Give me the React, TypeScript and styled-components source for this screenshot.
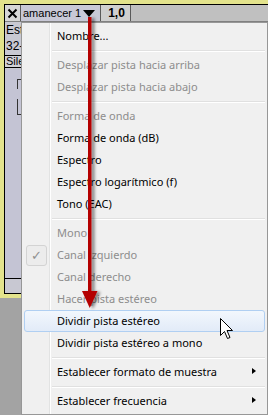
import React from 'react';
import styled, { createGlobalStyle, css } from 'styled-components';

const GlobalStyle = createGlobalStyle`
  html, body {
    margin: 0;
    padding: 0;
    background: #a3a3a3;
  }
  * {
    box-sizing: border-box;
  }
`;

const Screen = styled.div`
  position: relative;
  width: 268px;
  height: 415px;
  overflow: hidden;
  background: #a3a3a3;
  font-family: 'Liberation Sans', Arial, sans-serif;
`;

const Track = styled.div`
  height: 298px;
  border-top: 4px solid #e3e38c;
  border-left: 4px solid #e3e38c;
  border-bottom: 4px solid #e3e38c;
  background: #c0c0c0;
`;

const TrackInner = styled.div`
  display: flex;
  flex-direction: column;
  height: 100%;
  border-top: 1px solid #000;
  border-left: 1px solid #000;
  border-bottom: 1px solid #000;
`;

const TitleRow = styled.div`
  display: flex;
  height: 17px;
  border-bottom: 1px solid #808080;
  background: #c0c0c0;
`;

const TitleCell = styled.div<{ $w: number; $bg: string; $bold?: boolean }>`
  display: flex;
  align-items: center;
  width: ${(p) => p.$w}px;
  flex-shrink: 0;
  background: ${(p) => p.$bg};
  border-right: 1px solid #5a5a5a;
  padding-left: 2px;
  font-size: ${(p) => (p.$bold ? 12 : 11)}px;
  color: #000;
  white-space: nowrap;
  font-weight: ${(p) => (p.$bold ? 700 : 400)};
  justify-content: ${(p) => (p.$bold ? 'center' : 'flex-start')};
`;

const DropArrow = styled.span`
  margin-left: auto;
  margin-right: 5px;
  width: 0;
  height: 0;
  border-left: 6px solid transparent;
  border-right: 6px solid transparent;
  border-top: 7px solid #000;
`;

const Body = styled.div`
  display: flex;
  flex: 1;
`;

const ControlPanel = styled.div`
  display: flex;
  flex-direction: column;
  width: 130px;
  background: #c8c8d2;
  border-right: 1px solid #808080;
`;

/* only the left edge of the panel peeks out from under the menu */
const InfoLine = styled.div`
  width: 16px;
  height: 16px;
  overflow: hidden;
  padding-left: 1px;
  font-size: 12px;
  line-height: 16px;
  color: #000;
  white-space: nowrap;
`;

const ButtonRow = styled.div`
  display: flex;
  padding-top: 1px;
  height: 15px;
`;

const SmallButton = styled.div`
  width: 16px;
  height: 13px;
  overflow: hidden;
  border-top: 1px solid #000;
  border-bottom: 1px solid #000;
  background: #d0d0d6;
  font-size: 11px;
  line-height: 11px;
  padding-left: 1px;
  white-space: nowrap;
`;

const SliderArea = styled.div`
  flex: 1;
  display: flex;
  flex-direction: column;
  gap: 10px;
  padding-top: 10px;
  background: #c4c4d4;
`;

const Slider = styled.div<{ $flip?: boolean }>`
  margin-left: 12px;
  width: 100px;
  height: 10px;
  border-left: 1px solid #333;
  ${(p) =>
    p.$flip
      ? css`
          border-bottom: 1px solid #333;
          height: 16px;
        `
      : css`
          border-top: 1px solid #333;
        `}
`;

const PanelFooter = styled.div`
  height: 15px;
  border-top: 1px solid #000;
  background: #c8c8d2;
`;

const Wave = styled.div`
  flex: 1;
  background: #fff;
`;

const Menu = styled.div`
  position: absolute;
  left: 21px;
  top: 22px;
  width: 247px;
  height: 393px;
  padding: 2px;
  border: 1px solid #979797;
  background: linear-gradient(
    to right,
    #f0f0f0 0,
    #f0f0f0 27px,
    #e2e3e3 27px,
    #e2e3e3 28px,
    #ffffff 28px,
    #ffffff 29px,
    #f0f0f0 29px
  );
  font-family: 'Noto Sans', 'Open Sans', sans-serif;
  font-size: 11px;
`;

const Item = styled.div<{ $disabled?: boolean; $active?: boolean }>`
  display: flex;
  align-items: center;
  height: 22px;
  padding-bottom: 2px;
  border: 1px solid transparent;
  border-radius: 3px;
  color: ${(p) => (p.$disabled ? '#8d8d8d' : '#000')};
  white-space: nowrap;
  ${(p) =>
    p.$active &&
    css`
      border-color: #b0cff2;
      background: linear-gradient(to bottom, #f2f7fd, #e2ebf8);
    `}
`;

const Gutter = styled.div`
  display: flex;
  align-items: center;
  justify-content: center;
  width: 22px;
  height: 20px;
  margin-right: 10px;
`;

const CheckBox = styled.div`
  display: flex;
  align-items: center;
  justify-content: center;
  width: 21px;
  height: 21px;
  margin-top: 2px;
  border: 1px solid #d3d3d3;
  border-radius: 3px;
  background: #ececec;
  color: #8f8f8f;
  font-size: 13px;
`;

const Label = styled.span`
  flex: 1;
`;

const SubArrow = styled.span`
  margin-right: 8px;
  width: 0;
  height: 0;
  border-top: 3.5px solid transparent;
  border-bottom: 3.5px solid transparent;
  border-left: 4px solid #000;
`;

const Separator = styled.div`
  height: 7px;
  margin-left: 28px;
  display: flex;
  flex-direction: column;
  justify-content: center;
  &::before {
    content: '';
    height: 1px;
    background: #e0e0e0;
  }
  &::after {
    content: '';
    height: 1px;
    background: #ffffff;
  }
`;

const Overlay = styled.svg`
  position: absolute;
  left: 0;
  top: 0;
  pointer-events: none;
`;

type Entry =
  | { sep: true }
  | { label: string; disabled?: boolean; checked?: boolean; active?: boolean; sub?: boolean };

const entries: Entry[] = [
  { label: 'Nombre...' },
  { sep: true },
  { label: 'Desplazar pista hacia arriba', disabled: true },
  { label: 'Desplazar pista hacia abajo', disabled: true },
  { sep: true },
  { label: 'Forma de onda', disabled: true },
  { label: 'Forma de onda (dB)' },
  { label: 'Espectro' },
  { label: 'Espectro logarítmico (f)' },
  { label: 'Tono (EAC)' },
  { sep: true },
  { label: 'Mono', disabled: true },
  { label: 'Canal izquierdo', disabled: true, checked: true },
  { label: 'Canal derecho', disabled: true },
  { label: 'Hacer pista estéreo', disabled: true },
  { label: 'Dividir pista estéreo', active: true },
  { label: 'Dividir pista estéreo a mono' },
  { sep: true },
  { label: 'Establecer formato de muestra', sub: true },
  { sep: true },
  { label: 'Establecer frecuencia', sub: true },
];

const App = () => {
  return (
    <Screen>
      <GlobalStyle />
      <Track>
        <TrackInner>
          <TitleRow>
            <TitleCell $w={16} $bg="#d6d6d6">
              <svg width="11" height="11" viewBox="0 0 11 11">
                <path d="M1.5 1.5 L9.5 9.5 M9.5 1.5 L1.5 9.5" stroke="#000" strokeWidth="2" />
              </svg>
            </TitleCell>
            <TitleCell $w={80} $bg="#c8c8d6">
              amanecer 1
              <DropArrow />
            </TitleCell>
            <TitleCell $w={30} $bg="#cfcfcf" $bold>
              1,0
            </TitleCell>
          </TitleRow>
          <Body>
            <ControlPanel>
              <InfoLine>Estéreo, 44100Hz</InfoLine>
              <InfoLine>32-bit flotante</InfoLine>
              <ButtonRow>
                <SmallButton>Silencio</SmallButton>
              </ButtonRow>
              <SliderArea>
                <Slider />
                <Slider $flip />
              </SliderArea>
              <PanelFooter />
            </ControlPanel>
            <Wave />
          </Body>
        </TrackInner>
      </Track>

      <Menu>
        {entries.map((e, i) =>
          'sep' in e ? (
            <Separator key={i} />
          ) : (
            <Item key={i} $disabled={e.disabled} $active={e.active}>
              <Gutter>{e.checked && <CheckBox>✓</CheckBox>}</Gutter>
              <Label>{e.label}</Label>
              {e.sub && <SubArrow />}
            </Item>
          )
        )}
      </Menu>

      <Overlay width="268" height="415" viewBox="0 0 268 415">
        <defs>
          <filter id="shade" x="-50%" y="-5%" width="200%" height="110%">
            <feDropShadow dx="3" dy="1" stdDeviation="1.6" floodColor="#000" floodOpacity="0.45" />
          </filter>
        </defs>
        <g filter="url(#shade)" fill="#b40000">
          <rect x="88" y="17" width="3.5" height="277" />
          <polygon points="82,291 97.5,291 89.75,308" />
        </g>
      </Overlay>

      <Overlay width="268" height="415" viewBox="0 0 268 415">
        <path
          d="M220.5 318.5 L220.5 335.5 L224.5 331.5 L227.5 338.5 L230 337.5 L227 330.5 L232.5 330.5 Z"
          fill="#fff"
          stroke="#000"
          strokeWidth="1"
        />
      </Overlay>
    </Screen>
  );
};

export default App;
